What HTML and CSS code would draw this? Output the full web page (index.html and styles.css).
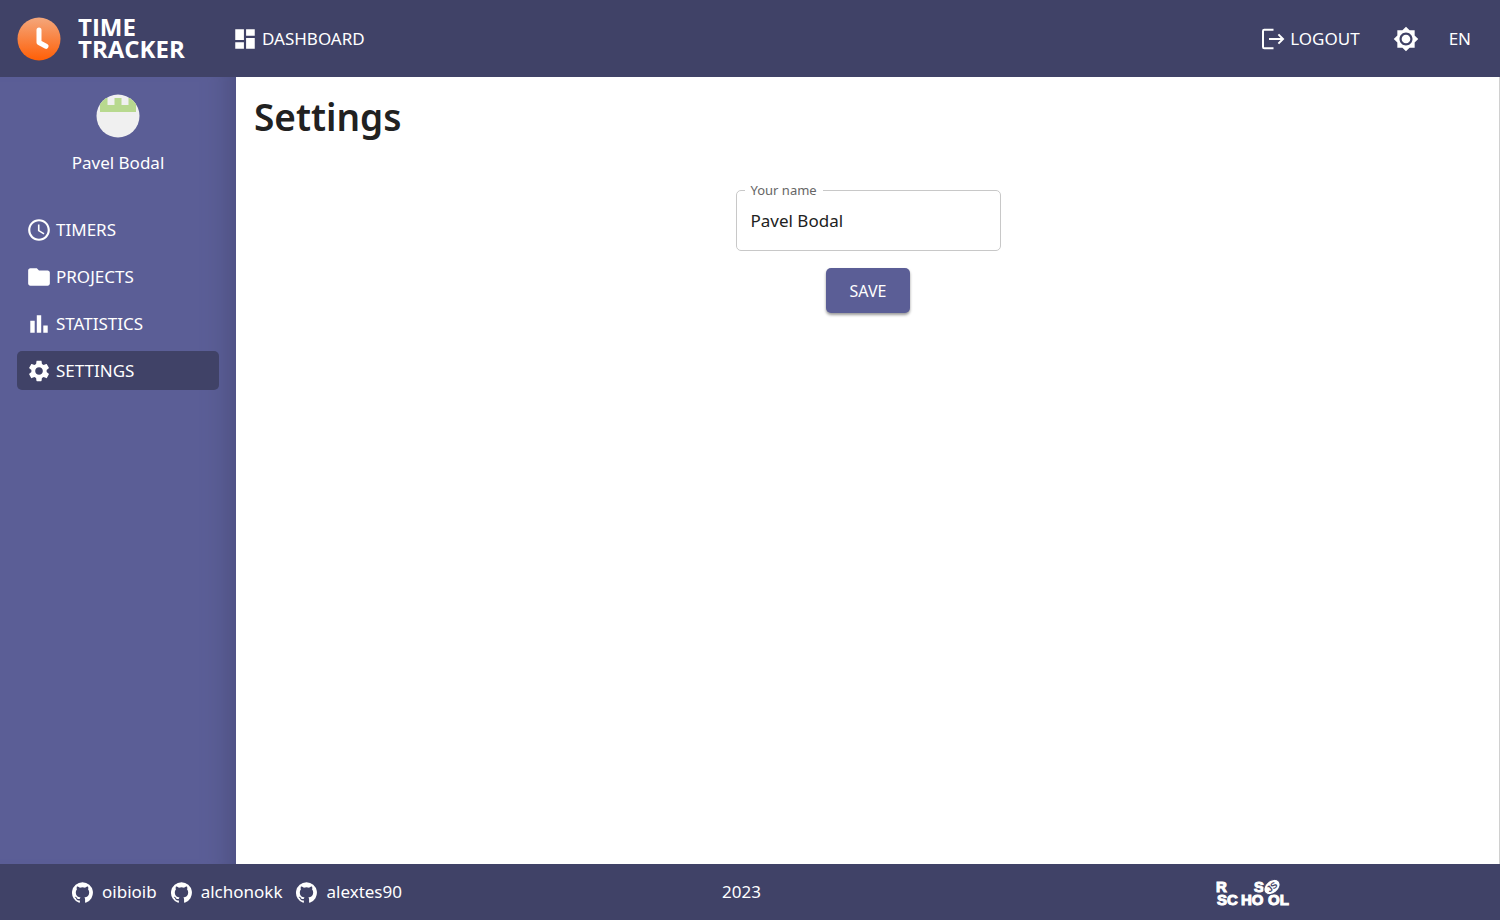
FILE: index.html
```html
<!DOCTYPE html>
<html lang="en">
<head>
<meta charset="utf-8">
<title>Time Tracker – Settings</title>
<link rel="stylesheet" href="styles.css">
</head>
<body>
<header class="header">
  <a class="logo" href="#">
    <svg class="logo-mark" viewBox="0 0 44 44" aria-hidden="true">
      <defs><linearGradient id="sun" x1="0" y1="0" x2="0" y2="1"><stop offset="0" stop-color="#f4a77c"/><stop offset="1" stop-color="#ff5f06"/></linearGradient></defs>
      <circle cx="22" cy="22" r="21.5" fill="url(#sun)"/>
      <path d="M22 13v12.500l7 3.800" fill="none" stroke="#fff" stroke-width="5" stroke-linecap="round" stroke-linejoin="round"/>
    </svg>
    <span class="logo-text">TIME<br>TRACKER</span>
  </a>
  <a class="link dashboard" href="#">
    <svg class="icon" viewBox="0 0 24 24" aria-hidden="true"><path d="M3 13h8V3H3v10zm0 8h8v-6H3v6zm10 0h8V11h-8v10zm0-18v6h8V3h-8z"/></svg>
    DASHBOARD
  </a>
  <div class="actions">
    <button class="link logout" type="button">
      <svg class="icon" viewBox="0 0 24 24" aria-hidden="true"><path d="M12.500 2.800H3.300Q2 2.800 2 4.100V19.900Q2 21.200 3.300 21.200H12.500M8 12H22M17.400 7.400L22 12L17.400 16.600" fill="none" stroke="#fff" stroke-width="2"/></svg>
      LOGOUT
    </button>
    <button class="link theme" type="button" aria-label="Switch theme">
      <svg class="icon" viewBox="0 0 24 24" aria-hidden="true"><path d="M20 8.690V4h-4.690L12 .690 8.690 4H4v4.690L.690 12 4 15.310V20h4.690L12 23.310 15.310 20H20v-4.690L23.310 12 20 8.690zM12 18c-3.310 0-6-2.690-6-6s2.690-6 6-6 6 2.690 6 6-2.690 6-6 6zm0-10c-2.210 0-4 1.790-4 4s1.790 4 4 4 4-1.790 4-4-1.790-4-4-4z"/></svg>
    </button>
    <button class="link" type="button">EN</button>
  </div>
</header>
<div class="body">
  <aside class="sidebar">
    <div class="user">
      <svg class="avatar" viewBox="0 0 44 44" aria-hidden="true">
        <defs><clipPath id="round"><circle cx="22" cy="22" r="21.500"/></clipPath></defs>
        <g clip-path="url(#round)"><path fill="#f0f0f0" d="M0 0h44v44H0z"/><path fill="#b8d98f" d="M4 4h7.500v7h7V4h7v7h7V4h7.500v14H4z"/></g>
      </svg>
      <span>Pavel Bodal</span>
    </div>
    <nav class="nav">
      <a class="link nav-item" href="#"><svg class="icon" viewBox="0 0 24 24" aria-hidden="true"><path d="M11.990 2C6.470 2 2 6.480 2 12s4.470 10 9.990 10C17.520 22 22 17.520 22 12S17.520 2 11.990 2zM12 20c-4.420 0-8-3.580-8-8s3.580-8 8-8 8 3.580 8 8-3.580 8-8 8zm.5-13H11v6l5.250 3.150.750-1.230-4.500-2.670z" transform="translate(-2.200 -2.200) scale(1.183)"/></svg>TIMERS</a>
      <a class="link nav-item" href="#"><svg class="icon" viewBox="0 0 24 24" aria-hidden="true"><path d="M10 4H4c-1.100 0-1.990.900-1.990 2L2 18c0 1.100.900 2 2 2h16c1.100 0 2-.900 2-2V8c0-1.100-.900-2-2-2h-8l-2-2z" transform="translate(-2.200 -2.200) scale(1.183)"/></svg>PROJECTS</a>
      <a class="link nav-item" href="#"><svg class="icon" viewBox="0 0 24 24" aria-hidden="true"><path d="M2.500 8.500h4.800V21.500H2.500zM9.600 2.500h4.800v19H9.600zM16.700 13.500h4.800v8h-4.800z"/></svg>STATISTICS</a>
      <a class="link nav-item active" href="#" aria-current="page"><svg class="icon" viewBox="0 0 24 24" aria-hidden="true"><path d="M19.140 12.940c.040-.300.060-.610.060-.940 0-.320-.020-.640-.070-.940l2.030-1.580c.180-.140.230-.410.120-.610l-1.920-3.320c-.120-.220-.370-.290-.590-.220l-2.390.960c-.500-.380-1.030-.700-1.620-.940l-.360-2.540c-.040-.240-.240-.410-.480-.410h-3.840c-.240 0-.430.170-.470.410l-.360 2.540c-.590.240-1.130.570-1.620.940l-2.390-.960c-.220-.080-.470 0-.590.220L2.740 8.870c-.120.210-.080.470.120.610l2.030 1.580c-.050.300-.090.630-.090.940s.020.640.070.940l-2.030 1.580c-.180.140-.230.410-.120.610l1.920 3.320c.120.220.370.290.590.220l2.390-.960c.500.380 1.030.700 1.620.940l.360 2.540c.050.240.240.410.480.410h3.840c.240 0 .440-.170.470-.410l.360-2.540c.590-.240 1.130-.560 1.620-.940l2.390.960c.220.080.470 0 .590-.220l1.920-3.320c.120-.220.070-.470-.120-.610l-2.010-1.580zM12 15.600c-1.980 0-3.600-1.620-3.600-3.600s1.620-3.600 3.600-3.600 3.600 1.620 3.600 3.600-1.620 3.600-3.600 3.600z" transform="translate(-1.900 -1.900) scale(1.160)"/></svg>SETTINGS</a>
    </nav>
  </aside>
  <main class="main">
    <h1 class="title">Settings</h1>
    <form class="form">
      <fieldset class="field">
        <legend class="legend"><label for="name">Your name</label></legend>
        <input class="input" id="name" type="text" value="Pavel Bodal">
      </fieldset>
      <button class="save" type="button">SAVE</button>
    </form>
  </main>
</div>
<footer class="footer">
  <svg width="0" height="0" class="sprite" aria-hidden="true"><symbol id="github" viewBox="0 0 24 24"><path d="M12 .300a12 12 0 0 0-3.800 23.380c.600.120.830-.260.830-.570L9 21.070c-3.340.720-4.040-1.610-4.040-1.610-.550-1.390-1.340-1.760-1.340-1.760-1.080-.740.090-.730.090-.730 1.200.090 1.840 1.240 1.840 1.240 1.070 1.830 2.810 1.300 3.500 1 .100-.780.420-1.310.760-1.610-2.670-.300-5.470-1.330-5.470-5.930 0-1.310.470-2.380 1.240-3.220-.140-.300-.540-1.520.100-3.180 0 0 1-.320 3.300 1.230a11.500 11.500 0 0 1 6 0c2.280-1.550 3.290-1.230 3.290-1.230.640 1.660.240 2.880.120 3.180a4.650 4.650 0 0 1 1.230 3.220c0 4.610-2.800 5.630-5.480 5.920.420.360.810 1.100.810 2.220l-.010 3.290c0 .310.200.690.820.570A12 12 0 0 0 12 .300"/></symbol></svg>
  <div class="authors">
    <a class="author" href="#"><svg class="github" aria-hidden="true"><use href="#github"/></svg>oibioib</a>
    <a class="author" href="#"><svg class="github" aria-hidden="true"><use href="#github"/></svg>alchonokk</a>
    <a class="author" href="#"><svg class="github" aria-hidden="true"><use href="#github"/></svg>alextes90</a>
  </div>
  <span class="year">2023</span>
  <a class="school" href="#" aria-label="RS School">
    <svg class="school-logo" viewBox="0 0 74 28">
      <g class="school-text"><text x="1" y="14">R</text><text x="39" y="14">S</text><text x="2" y="27">SC</text><text x="26" y="27">HO</text><text x="53" y="27">OL</text></g>
      <ellipse cx="57" cy="9" rx="9" ry="6.500" transform="rotate(-40 57 9)" fill="#fff" stroke="#404267" stroke-width="1"/>
      <text class="school-js" x="57" y="12" text-anchor="middle" transform="rotate(-40 57 9)">JS</text>
    </svg>
  </a>
</footer>
</body>
</html>
```
FILE: styles.css
```css
* { box-sizing: border-box; }

body {
  margin: 0;
  min-height: 100vh;
  display: flex;
  flex-direction: column;
  font: 17px/24px "Noto Sans", sans-serif;
  color: #212121;
  background: #fff;
}

a { color: inherit; text-decoration: none; }

button {
  font: inherit;
  color: inherit;
  background: none;
  border: 0;
  padding: 0;
  cursor: pointer;
}

.header {
  display: flex;
  align-items: center;
  height: 77px;
  padding: 0 29px 0 17px;
  background: #404267;
  color: #fff;
}

.logo {
  display: flex;
  align-items: center;
  gap: 17px;
  width: 215px;
}

.logo-mark { width: 44px; height: 44px; }

.logo-text {
  padding-bottom: 2px;
  font: bold 24px/22px "Open Sans", sans-serif;
}

.link {
  display: flex;
  align-items: center;
  gap: 6px;
}

.icon { width: 22px; height: 22px; fill: #fff; flex: none; }
.dashboard .icon, .theme .icon { width: 26px; height: 26px; }
.dashboard { gap: 4px; }
.logout { gap: 5px; margin-right: 3px; }
.logout .icon { width: 24px; height: 24px; }

.actions {
  display: flex;
  align-items: center;
  gap: 30px;
  margin-left: auto;
}

.body { flex: 1; display: flex; }

.sidebar {
  width: 236px;
  padding: 17px;
  color: #fff;
  background: #5b5e96;
  box-shadow: inset -32px 0 24px -24px #4d5082;
}

.user {
  display: flex;
  flex-direction: column;
  align-items: center;
  gap: 13px;
}

.avatar { width: 44px; height: 44px; }

.nav {
  display: flex;
  flex-direction: column;
  gap: 8px;
  margin-top: 35px;
}

.nav-item { height: 39px; padding: 0 11px; border-radius: 5px; }
.active { background: #404267; }

.main {
  flex: 1;
  padding: 14px 17px 14px 18px;
  border-right: 1px solid #d0d0d0;
}

.title { margin: 0; font-size: 37px; line-height: 52px; font-weight: 600; }

.form {
  display: flex;
  flex-direction: column;
  align-items: center;
  gap: 17px;
  margin-top: 39px;
}

.field {
  width: 265px;
  margin: 0;
  padding: 0 8px 8px;
  border: 1px solid #c8c8c8;
  border-radius: 5px;
}

.legend { padding: 0 6px; font-size: 13px; line-height: 16px; color: #666; }

.input {
  display: block;
  width: 100%;
  height: 44px;
  padding: 0 6px;
  border: 0;
  outline: 0;
  background: none;
  font: inherit;
  color: inherit;
}

.save {
  height: 45px;
  padding: 0 24px;
  font-size: 16px;
  border-radius: 5px;
  color: #fff;
  background: #5b5e96;
  box-shadow: 0 2px 3px rgba(0, 0, 0, .4);
}

.footer {
  display: grid;
  grid-template-columns: 1fr auto 1fr;
  align-items: center;
  height: 56px;
  padding: 0 89px 0 72px;
  color: #fff;
  background: #404267;
}

.sprite { position: absolute; }
.authors { display: flex; gap: 14px; }
.author { display: flex; align-items: center; gap: 9px; }
.github { width: 21px; height: 21px; fill: #fff; }
.school { justify-self: end; margin-right: 122px; }
.school-logo { display: block; width: 74px; height: 28px; overflow: visible; fill: #fff; }
.school-text { font: bold 15px "Liberation Sans", sans-serif; stroke: #fff; stroke-width: 1px; }
.school-js { font: bold 9px "Liberation Sans", sans-serif; fill: #404267; }
```
